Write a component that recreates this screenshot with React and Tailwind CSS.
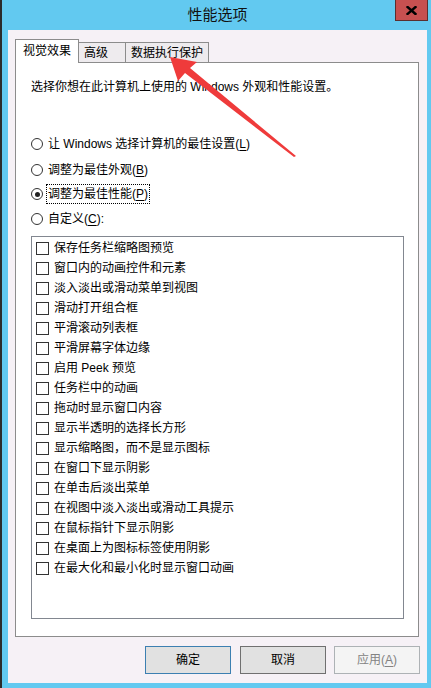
import React from "react";

const font = { fontFamily: '"Liberation Sans", "Noto Sans CJK SC", sans-serif' };

function Radio({ checked, label, mnemonic, suffix = "", focus = false, className = "" }) {
  return (
    <div className={"flex h-[20px] items-center " + className}>
      <div className="flex h-[12px] w-[12px] items-center justify-center rounded-full border border-[#333] bg-white">
        {checked && <div className="h-[5px] w-[5px] rounded-full bg-[#222]" />}
      </div>
      <div
        className={
          "ml-[3px] flex h-[20px] items-center px-px border border-dotted " +
          (focus ? "border-black" : "border-transparent")
        }
      >
        <span className="text-[12px] leading-[16px] text-black">
          {label}(<span className="underline underline-offset-[2px]">{mnemonic}</span>){suffix}
        </span>
      </div>
    </div>
  );
}

function Check({ label }) {
  return (
    <div className="flex h-[20px] items-center pl-[4px]">
      <div className="h-[13px] w-[13px] border border-[#333] bg-white" />
      <span className="ml-[5px] text-[12px] leading-[16px] text-black">{label}</span>
    </div>
  );
}

const items = [
  "保存任务栏缩略图预览",
  "窗口内的动画控件和元素",
  "淡入淡出或滑动菜单到视图",
  "滑动打开组合框",
  "平滑滚动列表框",
  "平滑屏幕字体边缘",
  "启用 Peek 预览",
  "任务栏中的动画",
  "拖动时显示窗口内容",
  "显示半透明的选择长方形",
  "显示缩略图，而不是显示图标",
  "在窗口下显示阴影",
  "在单击后淡出菜单",
  "在视图中淡入淡出或滑动工具提示",
  "在鼠标指针下显示阴影",
  "在桌面上为图标标签使用阴影",
  "在最大化和最小化时显示窗口动画",
];

export default function App() {
  return (
    <div
      className="relative flex h-[688px] w-[431px] flex-col overflow-hidden border-l-2 border-[#2b2b2b] bg-[#62c9f0]"
      style={font}
    >
      {/* Title bar */}
      <div className="relative flex h-[30px] items-center justify-center">
        <span className="pl-[2px] text-[15px] leading-[20px] text-[#111]">性能选项</span>
        <div className="absolute right-[3px] top-0 flex h-[21px] w-[33px] items-center justify-center border border-t-0 border-[#5b2f2f] bg-[#c75050]">
          <svg width="11" height="9" viewBox="0 0 11 9">
            <path d="M1.5 1 L9.5 8 M9.5 1 L1.5 8" stroke="#000" strokeWidth="2.4" strokeLinecap="square" />
          </svg>
        </div>
      </div>

      {/* Client area */}
      <div className="ml-[6px] mr-[4px] flex h-[653px] flex-col bg-[#f6f1f6] pl-[7px] pr-[8px] pt-[9px]">
        {/* Tabs */}
        <div className="flex h-[23px] items-end">
          <div className="relative z-10 -mb-px flex h-[24px] w-[64px] items-start border border-b-0 border-[#8c8c8c] bg-white pl-[7px] pt-[3px]">
            <span className="text-[12px] leading-[16px] text-black">视觉效果</span>
          </div>
          <div className="flex h-[20px] w-[47px] items-center border border-b-0 border-l-0 border-[#8c8c8c] bg-[#eeebee] pl-[5px]">
            <span className="text-[12px] leading-[16px] text-black">高级</span>
          </div>
          <div className="flex h-[20px] w-[83px] items-center border border-b-0 border-l-0 border-[#8c8c8c] bg-[#eeebee] pl-[5px]">
            <span className="text-[12px] leading-[16px] text-black">数据执行保护</span>
          </div>
        </div>

        {/* Panel */}
        <div className="flex h-[575px] flex-col border border-[#8c8c8c] bg-white pl-[15px] pr-[14px]">
          <div className="mt-[16px] h-[16px] text-[12px] leading-[16px] text-black">
            选择你想在此计算机上使用的 Windows 外观和性能设置。
          </div>
          <Radio className="mt-[39px]" label="让 Windows 选择计算机的最佳设置" mnemonic="L" />
          <Radio className="mt-[6px]" label="调整为最佳外观" mnemonic="B" />
          <Radio className="mt-[4px]" label="调整为最佳性能" mnemonic="P" checked focus />
          <Radio className="mt-[5px]" label="自定义" mnemonic="C" suffix=":" />
          <div className="mt-[7px] flex h-[383px] flex-col border border-[#828790] bg-white pt-[1px]">
            {items.map((t) => (
              <Check key={t} label={t} />
            ))}
          </div>
        </div>

        {/* Buttons */}
        <div className="mt-[9px] flex justify-end pr-[-1px]">
          <button className="flex h-[28px] w-[86px] items-center justify-center border border-[#3c7fb1] bg-[#e1e1e1] text-[12px] text-black">
            确定
          </button>
          <button className="ml-[9px] flex h-[28px] w-[86px] items-center justify-center border border-[#707070] bg-[#e1e1e1] text-[12px] text-black">
            取消
          </button>
          <button className="ml-[8px] mr-[-1px] flex h-[28px] w-[86px] items-center justify-center border border-[#adb2b5] bg-[#f4f4f4] text-[12px] text-[#838383]">
            应用(<span className="underline underline-offset-[2px]">A</span>)
          </button>
        </div>
      </div>

      {/* Red annotation arrow */}
      <svg className="pointer-events-none absolute left-[-2px] top-0" width="431" height="688" viewBox="0 0 431 688">
        <polygon
          points="170,57 197,62 190,68 296,156 294,157 185,73 178,81"
          fill="#ef3b3b"
        />
      </svg>
    </div>
  );
}
